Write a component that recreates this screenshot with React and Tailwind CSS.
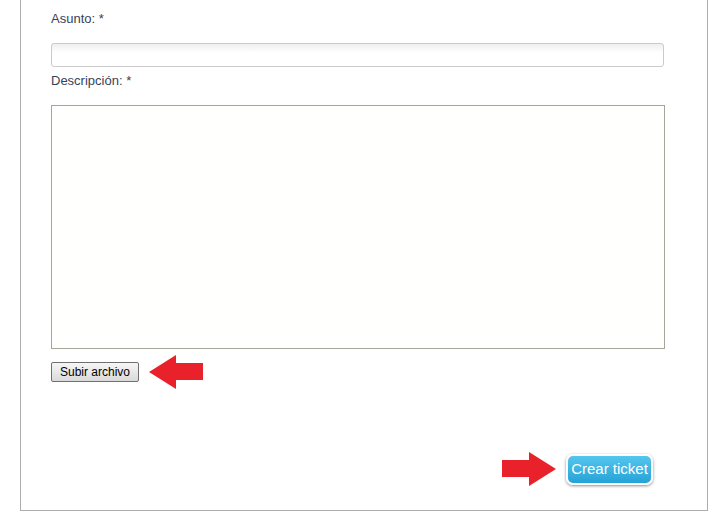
import React from 'react';

function Arrow({ flip }) {
  return (
    <svg
      width="54"
      height="34"
      viewBox="0 0 54 34"
      className={flip ? 'block -scale-x-100' : 'block'}
    >
      <polygon points="0,17 27,0 27,8 54,8 54,25 27,25 27,34" fill="#e8212b" />
    </svg>
  );
}

export default function App() {
  return (
    <div className="min-h-screen bg-white font-['Liberation_Sans',Arial,sans-serif]">
      <div className="ml-[20px] w-[688px] border-x border-b border-[#adadad] pl-[30px] pr-[43px] pt-[11px] pb-[24px]">
        <label className="block h-[16px] text-[13px] leading-[16px] text-[#36425a]">
          Asunto: *
        </label>
        <input
          type="text"
          className="mt-[16px] block h-[24px] w-[613px] rounded-[3px] border border-[#cbcbcb] bg-gradient-to-b from-[#efefef] to-white to-40% outline-none"
        />
        <label className="mt-[6px] block h-[16px] text-[13px] leading-[16px] text-[#36425a]">
          Descripción: *
        </label>
        <textarea className="mt-[16px] block h-[244px] w-[614px] resize-none border border-[#a5a69a] bg-[#fffffd] outline-none" />
        <div className="mt-[6px] flex items-center gap-[10px]">
          <button className="h-[20px] w-[88px] rounded-[2px] border border-[#6f6f6f] bg-gradient-to-b from-[#f6f6f6] to-[#dadada] text-[12px] leading-[16px] text-black">
            Subir archivo
          </button>
          <Arrow />
        </div>
        <div className="mt-[63px] flex items-center justify-end gap-[10px] pr-[11px]">
          <Arrow flip />
          <button className="h-[31px] w-[87px] rounded-[7px] border-2 border-white bg-gradient-to-b from-[#52c6ee] to-[#23a3d6] text-[15px] leading-[18px] text-white shadow-[0_1px_3px_rgba(0,0,0,0.45)]">
            Crear ticket
          </button>
        </div>
      </div>
    </div>
  );
}
